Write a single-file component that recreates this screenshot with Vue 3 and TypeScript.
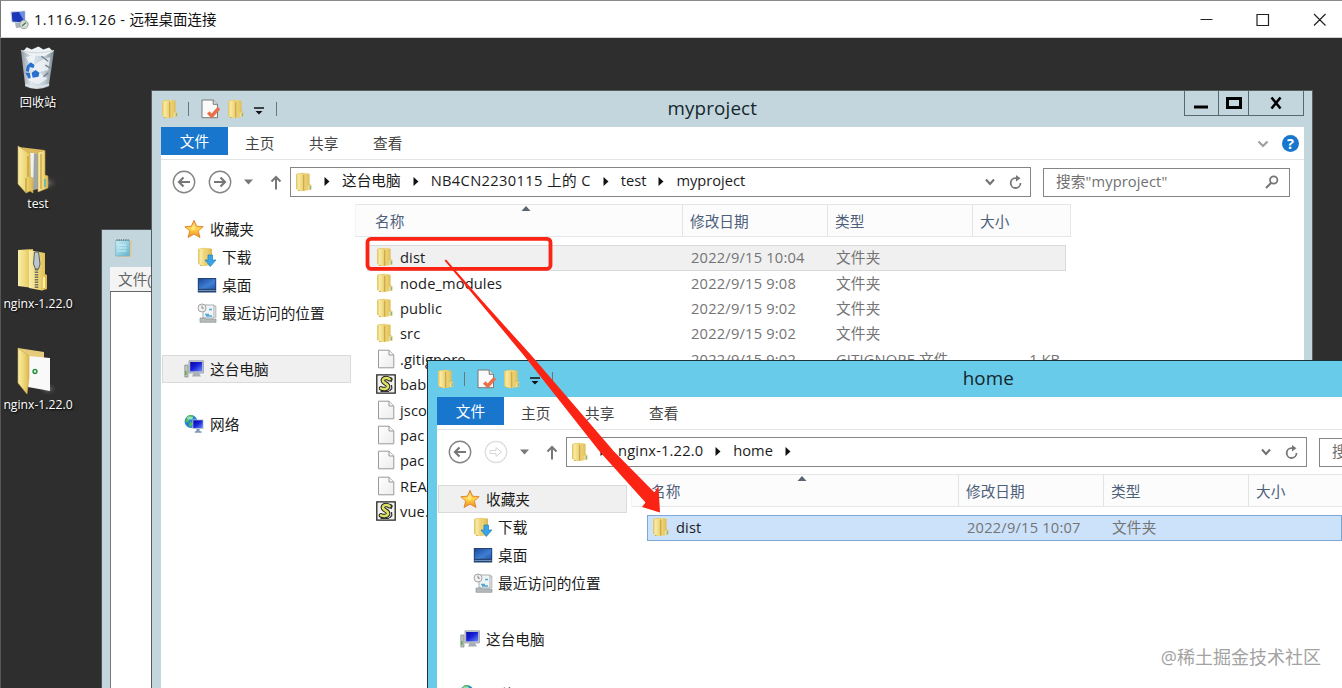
<script setup lang="ts">
interface FileRow {
  name: string
  icon: string
  date: string
  type: string
  size?: string
  state?: string
}
interface NavItem {
  label: string
  icon: string
  cls?: string
}
interface Crumb {
  label: string
  cls?: string
}
interface ExplorerWindow {
  id: string
  title: string
  path: Crumb[]
  search: string
  trailing: boolean
  selectedNav: string
  rows: FileRow[]
}

const desktopIcons = [
  { label: '回收站', icon: 'bin', cls: 'recycle' },
  { label: 'test', icon: 'folder-open', cls: 'test' },
  { label: 'nginx-1.22.0', icon: 'zip', cls: 'zipped' },
  { label: 'nginx-1.22.0', icon: 'folder-doc', cls: 'extracted' },
]

const nav: NavItem[] = [
  { label: '收藏夹', icon: 'star' },
  { label: '下载', icon: 'download', cls: 'child' },
  { label: '桌面', icon: 'desktop', cls: 'child' },
  { label: '最近访问的位置', icon: 'recent', cls: 'child' },
  { label: '这台电脑', icon: 'pc', cls: 'gap' },
  { label: '网络', icon: 'network', cls: 'gap' },
]

const tabs = ['主页', '共享', '查看']

const windows: ExplorerWindow[] = [
  {
    id: 'project',
    title: 'myproject',
    path: [
      { label: '这台电脑' },
      { label: 'NB4CN2230115 上的 C', cls: 'drive' },
      { label: 'test' },
      { label: 'myproject' },
    ],
    search: '搜索"myproject"',
    trailing: false,
    selectedNav: '这台电脑',
    rows: [
      { name: 'dist', icon: 'folder', date: '2022/9/15 10:04', type: '文件夹', state: 'hover' },
      { name: 'node_modules', icon: 'folder', date: '2022/9/15 9:08', type: '文件夹' },
      { name: 'public', icon: 'folder', date: '2022/9/15 9:02', type: '文件夹' },
      { name: 'src', icon: 'folder', date: '2022/9/15 9:02', type: '文件夹' },
      { name: '.gitignore', icon: 'file', date: '2022/9/15 9:02', type: 'GITIGNORE 文件', size: '1 KB' },
      { name: 'bab', icon: 'script', date: '', type: '' },
      { name: 'jsco', icon: 'file', date: '', type: '' },
      { name: 'pac', icon: 'file', date: '', type: '' },
      { name: 'pac', icon: 'file', date: '', type: '' },
      { name: 'REA', icon: 'file', date: '', type: '' },
      { name: 'vue.', icon: 'script', date: '', type: '' },
    ],
  },
  {
    id: 'home',
    title: 'home',
    path: [{ label: 'nginx-1.22.0', cls: 'version' }, { label: 'home' }],
    search: '搜索"home"',
    trailing: true,
    selectedNav: '收藏夹',
    rows: [{ name: 'dist', icon: 'folder', date: '2022/9/15 10:07', type: '文件夹', state: 'selected' }],
  },
]
</script>

<template>
  <div class="screen">
    <svg class="defs" aria-hidden="true">
      <defs>
        <linearGradient id="gFold" x1="0" x2="1"><stop offset="0" stop-color="#f8edaa" /><stop offset=".5" stop-color="#efd878" /><stop offset="1" stop-color="#dcb84c" /></linearGradient>
        <linearGradient id="gCover" x1="0" x2="1"><stop offset="0" stop-color="#dfc25a" /><stop offset=".35" stop-color="#f8eba6" /><stop offset="1" stop-color="#e9cd6c" /></linearGradient>
        <linearGradient id="gLeaf" x1="0" x2="1"><stop offset="0" stop-color="#c99f34" /><stop offset=".5" stop-color="#efd67a" /><stop offset="1" stop-color="#d9b54e" /></linearGradient>
        <linearGradient id="gStar" x1="0" y1="0" x2="0" y2="1"><stop offset="0" stop-color="#f0902c" /><stop offset=".5" stop-color="#ffd74a" /><stop offset="1" stop-color="#f08a20" /></linearGradient>
        <linearGradient id="gScreen" x1="0" y1="0" x2="1" y2="1"><stop offset="0" stop-color="#0808a0" /><stop offset=".45" stop-color="#1720d8" /><stop offset="1" stop-color="#6c8df0" /></linearGradient>
        <linearGradient id="gDesk" x1="0" y1="0" x2="1" y2="1"><stop offset="0" stop-color="#1b4a9c" /><stop offset=".6" stop-color="#3f7fd4" /><stop offset="1" stop-color="#2459b0" /></linearGradient>
        <linearGradient id="gPaper" x1="0" y1="0" x2="1" y2="1"><stop offset="0" stop-color="#fff" /><stop offset="1" stop-color="#ececec" /></linearGradient>
        <linearGradient id="gBin" x1="0" x2="1"><stop offset="0" stop-color="#8e979d" /><stop offset=".3" stop-color="#dfe8ee" /><stop offset=".7" stop-color="#c1ced8" /><stop offset="1" stop-color="#7d878e" /></linearGradient>
        <linearGradient id="gPad" x1="0" y1="0" x2="1" y2="1"><stop offset="0" stop-color="#c9eef6" /><stop offset="1" stop-color="#5fb4cd" /></linearGradient>
        <radialGradient id="gShade"><stop offset="0" stop-color="#8c8c8c" stop-opacity=".7" /><stop offset="1" stop-color="#2e2e2e" stop-opacity="0" /></radialGradient>

        <symbol id="folder" viewBox="0 0 18 20">
          <path d="M2.5 1.6 8 .8 14.6 1.8V12L16.4 13.2V17.6L9 19H3z" fill="url(#gLeaf)" />
          <path d="M1 2.6Q1 1.8 2 1.7L7.4 1.2Q8.6 1.4 8.6 2.6V18.4L6.8 19.2 1 17z" fill="url(#gCover)" />
          <path d="M8.8 3V18.6" stroke="#b98f2c" stroke-width=".8" fill="none" />
          <path d="M12.6 13.5 16.3 13.2V17.6L12.6 18.3z" fill="#f0dc90" />
          <path d="M15.3 14v3.2" stroke="#68b0a8" stroke-width="1.1" />
        </symbol>
        <symbol id="file" viewBox="0 0 18 20">
          <path d="M1.5 1.2H12L16.8 5.8V18.8H1.5z" fill="url(#gPaper)" stroke="#999" />
          <path d="M12 1.2V6H16.8" fill="#f7f7f7" stroke="#999" />
        </symbol>
        <symbol id="script" viewBox="0 0 20 20">
          <path d="M.8.8H19.2V19.2H.8z" fill="#f3f3ed" stroke="#222" stroke-width="1.3" />
          <path d="M13.6 5.2C9.5 2.6 5.5 4.8 7.4 7.8 8.8 9.8 12.8 10 12 13 11 15.6 7.5 15.4 5 14.4" fill="none" stroke="#222" stroke-width="4.6" stroke-linecap="round" />
          <path d="M13.6 5.2C9.5 2.6 5.5 4.8 7.4 7.8 8.8 9.8 12.8 10 12 13 11 15.6 7.5 15.4 5 14.4" fill="none" stroke="#dde264" stroke-width="2.6" stroke-linecap="round" />
          <path d="M14.5 3.5 16.2 5 15 8M15.5 11 15.8 14.5 13.5 17M4.5 17.3H13" fill="none" stroke="#333" stroke-width="1.2" />
        </symbol>
        <symbol id="check" viewBox="0 0 19 20">
          <path d="M1 1H12.2L16.5 5.3V18.7H1z" fill="#fafafa" stroke="#777" />
          <path d="M12.2 1V5.3H16.5" fill="#ddd" stroke="#777" />
          <path d="M7.2 13.5 10.8 17 18 9" fill="none" stroke="#e8704a" stroke-width="3.5" />
        </symbol>
        <symbol id="star" viewBox="0 0 20 19">
          <path d="M10 .8 12.6 6.7 19.2 7.2 14.3 11.5 16 18 10 14.6 4 18 5.8 11.5.8 7.2 7.4 6.7z" fill="url(#gStar)" stroke="#df812d" stroke-width=".9" />
          <path d="M10 3 11.7 7.7 10 11 7 9.5z" fill="#fff08a" opacity=".7" />
        </symbol>
        <symbol id="download" viewBox="0 0 20 20">
          <path d="M2.5 1.6 8 .8 15 1.8V18L9 19H3z" fill="url(#gLeaf)" />
          <path d="M1 2.6Q1 1.8 2 1.7L7.4 1.2Q8.6 1.4 8.6 2.6V18.4L6.8 19.2 1 17z" fill="url(#gCover)" />
          <path d="M11 8H15.5V13H19L13.3 19.5 8 13H11z" fill="#3aa2e6" stroke="#247fbf" stroke-width=".7" />
        </symbol>
        <symbol id="desktop" viewBox="0 0 20 20">
          <path d="M.8 3H19.2V17.5H.8z" fill="#25436f" />
          <path d="M1.8 4H18.2V13.8H1.8z" fill="url(#gDesk)" />
          <path d="M1.5 15.5H18.5" stroke="#7fa6cf" stroke-width=".8" />
        </symbol>
        <symbol id="recent" viewBox="0 0 20 20">
          <path d="M6 2H17V15H6z" fill="#eef3f5" stroke="#a6aeb2" />
          <path d="M12 6.5h3M8 11.5h4M9 13h6" stroke="#54a8d2" stroke-width="1.5" />
          <path d="M3 15H8L9 16H19V19.3H3z" fill="#b5babd" stroke="#8f9598" stroke-width=".7" />
          <path d="M17 3h1.8v12" fill="none" stroke="#a6aeb2" />
          <circle cx="5" cy="5" r="4" fill="#f1f1f1" stroke="#a4a4a4" />
          <path d="M5 2.5V5.2H7" stroke="#777" fill="none" stroke-width=".8" />
        </symbol>
        <symbol id="pc" viewBox="0 0 20 20">
          <path d="M.8 6H4V18H.8z" fill="#bfc6c0" stroke="#808883" stroke-width=".7" />
          <path d="M1.8 12v4" stroke="#57a94b" stroke-width="1.4" />
          <path d="M5 1.8H19.4V14H5z" fill="#c6ccd4" stroke="#888f98" stroke-width=".7" />
          <path d="M6.2 3H18.2V12.4H6.2z" fill="url(#gScreen)" />
          <path d="M9.5 14H15L17 17.5H8z" fill="#a7adb3" />
        </symbol>
        <symbol id="network" viewBox="0 0 20 20">
          <circle cx="7" cy="7.5" r="6.4" fill="#2585cf" />
          <path d="M3 3C6 0 8 1 9.5 2.5L7.5 5 5 5.5 4.5 8 1.2 8M6 8 9 9 7 13 5 12z" fill="#54bd54" />
          <ellipse cx="6" cy="4" rx="3" ry="1.6" fill="#bdf1e6" opacity=".7" />
          <path d="M8.5 5.5H19.5V15H8.5z" fill="#b7c4d6" />
          <path d="M9.3 6.3H18.7V14H9.3z" fill="url(#gScreen)" />
          <path d="M12.4 15h3.2v2.3h2v1.5H10.8v-1.5h1.6z" fill="#8096b5" />
        </symbol>
        <symbol id="bin" viewBox="0 0 38 46">
          <path d="M2 5 6.5 42Q18 47 30.5 42L36 5z" fill="url(#gBin)" />
          <path d="M4 6 8 1.8 13 4 20 .8 25 4 31 2 35 6 26 11 12 10z" fill="#eef2f4" />
          <path d="M7 12 17 9 15 20 25 14 32 12 30 25 21 27 29 34 20 40 9 35 16 27z" fill="#f3f7fa" opacity=".75" />
          <path d="M27 20 32 23 M23 11l7 5M25 32l5-4" stroke="#737f89" stroke-width="1.4" />
          <path d="M8 21 12 17 16 20 15 23 11 22 10 27 7 26zM6.5 28 11 28 12 33 10 34zM14 33 13 28 17 25 21 28 20 32z" fill="#286fce" />
          <path d="M2 5Q18 10 36 5" fill="none" stroke="#ccd4da" />
          <path d="M6.3 40Q18 45 31 40" fill="none" stroke="#e5e8e9" stroke-width="1.5" />
        </symbol>
        <symbol id="folder-open" viewBox="0 0 42 50">
          <ellipse cx="30" cy="38" rx="12" ry="8" fill="url(#gShade)" />
          <path d="M2 2 27 5V38L16 40z" fill="#dcb95a" />
          <path d="M13 8 18 8 21 44 14 45z" fill="#f2f2ea" />
          <path d="M17 8 22 10V44H16z" fill="#9fa6a8" />
          <path d="M21 7 28 5.5V30L31 31V43L21 47z" fill="url(#gFold)" stroke="#c2a04a" stroke-width=".6" />
          <path d="M1 1 13 9V32L16 33V48L13 46 9 48 1 39z" fill="url(#gFold)" stroke="#c9a850" stroke-width=".6" />
          <path d="M24 9V44M9 33V47M11 11V32" stroke="#b98f30" stroke-width="1" />
          <path d="M28 34v8" stroke="#73b9b1" stroke-width="2" />
        </symbol>
        <symbol id="zip" viewBox="0 0 42 50">
          <path d="M1 4 16 3V42L1 40z" fill="url(#gFold)" />
          <path d="M12 4 28 7V28L30 29V43L25 44.5 12 42z" fill="url(#gFold)" />
          <path d="M19.5 18V43" stroke="#76715f" stroke-width="3.5" stroke-dasharray="1.5 1" />
          <path d="M17.5 6h4l1.5 12-1.5 5h-3l-2-5z" fill="#bfc7cc" stroke="#566067" />
          <path d="M27 31v11" stroke="#fff0a6" stroke-width="2" />
        </symbol>
        <symbol id="folder-doc" viewBox="0 0 42 50">
          <ellipse cx="31" cy="42" rx="10" ry="7" fill="url(#gShade)" />
          <path d="M1 1 27 5V30H1z" fill="#e5cb7b" />
          <path d="M11 9 33 11V44L11 40z" fill="#f9f9f9" />
          <path d="M1 1 12 9V31L10 47 1 36z" fill="url(#gFold)" stroke="#c9a850" stroke-width=".6" />
          <circle cx="18" cy="24.5" r="1.9" fill="none" stroke="#269140" stroke-width="1.5" />
        </symbol>
        <symbol id="rdp" viewBox="0 0 20 20">
          <path d="M1 2 15 1V13L2 12z" fill="#1a38b8" stroke="#cad4e2" />
          <path d="M9 2H14.5V12z" fill="#8db2f5" opacity=".7" />
          <path d="M5 13H12L15 17 6 18z" fill="#a9b2b8" />
          <circle cx="14" cy="14.5" r="4.2" fill="#d6ddd9" stroke="#9ba39f" />
          <path d="M12 16 16 12.5" stroke="#4d7f4d" stroke-width="1.4" />
        </symbol>
      </defs>
    </svg>

    <header class="rdp-bar">
      <svg class="rdp-icon"><use href="#rdp" /></svg>
      <span class="rdp-title"><span class="host">1.116.9.126 - </span>远程桌面连接</span>
      <svg class="rdp-controls" viewBox="0 0 128 16">
        <path d="M.5 7.5H12.5M57 2.5H68.5V13.5H57zM114 2 125.5 13.5M125.5 2 114 13.5" fill="none" stroke="#222" stroke-width="1.2" />
      </svg>
    </header>

    <main class="desktop">
      <figure v-for="(d, i) in desktopIcons" :key="i" class="shortcut" :class="d.cls">
        <svg class="shortcut-icon"><use :href="'#' + d.icon" /></svg>
        <figcaption>{{ d.label }}</figcaption>
      </figure>
    </main>

    <section class="notepad">
      <div class="notepad-title">
        <svg viewBox="0 0 18 20">
          <path d="M2 2H17V19H3z" fill="#d9c79c" />
          <path d="M1 2.5H15V18H1z" fill="url(#gPad)" stroke="#79aebd" stroke-width=".6" />
          <path d="M2 2H15" stroke="#56777f" stroke-width="1.6" stroke-dasharray="1.2 1" />
          <path d="M3 7h9M3 10h9M3 13h9" stroke="#e0f8fc" stroke-width=".8" />
        </svg>
      </div>
      <div class="notepad-menu">文件(F)</div>
      <div class="notepad-body"></div>
    </section>

    <section v-for="w in windows" :key="w.id" class="window" :class="w.id">
      <div class="titlebar">
        <div class="quick">
          <svg class="q-folder"><use href="#folder" /></svg>
          <i class="sep"></i>
          <svg class="q-check"><use href="#check" /></svg>
          <svg class="q-folder"><use href="#folder" /></svg>
          <svg class="q-more" viewBox="0 0 10 8"><path d="M0 1H10" stroke="#111" stroke-width="1.5" /><path d="M1.5 4H8.5L5 7.5z" fill="#111" /></svg>
          <i class="sep"></i>
        </div>
        <h1>{{ w.title }}</h1>
        <div class="controls">
          <span class="c-min"><svg viewBox="0 0 16 14"><path d="M1 11H15" stroke="#000" stroke-width="3" /></svg></span>
          <span class="c-max"><svg viewBox="0 0 16 14"><path d="M1.5 2.5H14.5V11.5H1.5z" fill="none" stroke="#000" stroke-width="3" /></svg></span>
          <span class="c-close"><svg viewBox="0 0 16 14"><path d="M3.5 1.5 12.5 12.5M12.5 1.5 3.5 12.5" stroke="#000" stroke-width="2.6" /></svg></span>
        </div>
      </div>
      <div class="content">
        <div class="ribbon">
          <span class="tab-file">文件</span>
          <span v-for="t in tabs" :key="t" class="tab">{{ t }}</span>
          <svg class="collapse" viewBox="0 0 12 8"><path d="M1.5 1.5 6 6 10.5 1.5" fill="none" stroke="#a0a0a0" stroke-width="2.2" /></svg>
          <span class="help">?</span>
        </div>
        <div class="navbar">
          <svg class="circle" viewBox="0 0 24 24"><circle cx="12" cy="12" r="10.7" fill="none" stroke="#858585" stroke-width="1.4" /><path d="M18 12H7M11.5 7.5 7 12 11.5 16.5" fill="none" stroke="#777" stroke-width="2.2" /></svg>
          <svg v-if="!w.trailing" class="circle forward" viewBox="0 0 24 24"><circle cx="12" cy="12" r="10.7" fill="none" stroke="#858585" stroke-width="1.4" /><path d="M6 12H17M12.5 7.5 17 12 12.5 16.5" fill="none" stroke="#777" stroke-width="2.2" /></svg>
          <svg v-else class="circle forward" viewBox="0 0 24 24"><circle cx="12" cy="12" r="10.7" fill="none" stroke="#dedede" stroke-width="1.3" /><path d="M6 10.5H12V7.5L17.5 12 12 16.5V13.5H6z" fill="none" stroke="#d5d5d5" /></svg>
          <svg class="history" viewBox="0 0 9 6"><path d="M0 .5H9L4.5 5.5z" fill="#777" /></svg>
          <svg class="up" viewBox="0 0 12 15"><path d="M6 14.5V2M1.5 6.5 6 2 10.5 6.5" fill="none" stroke="#777" stroke-width="2" /></svg>
          <div class="address">
            <svg class="q-folder"><use href="#folder" /></svg>
            <template v-for="p in w.path" :key="p.label">
              <svg class="crumb-arrow" viewBox="0 0 6 9"><path d="M.5 0 5.5 4.5.5 9z" fill="#111" /></svg>
              <span class="crumb" :class="p.cls">{{ p.label }}</span>
            </template>
            <svg v-if="w.trailing" class="crumb-arrow" viewBox="0 0 6 9"><path d="M.5 0 5.5 4.5.5 9z" fill="#111" /></svg>
            <svg class="drop" viewBox="0 0 10 8"><path d="M1 1.5 5 6 9 1.5" fill="none" stroke="#707070" stroke-width="2" /></svg>
            <svg class="refresh" viewBox="0 0 14 15"><path d="M8 3.2H6.5A4.9 4.9 0 1 0 11.5 8" fill="none" stroke="#777" stroke-width="1.8" /><path d="M7 0 11.5 3.3 7 6.6z" fill="#777" /></svg>
          </div>
          <div class="search">
            <span>{{ w.search }}</span>
            <svg viewBox="0 0 14 14"><circle cx="8.7" cy="5" r="3.7" fill="none" stroke="#777" stroke-width="1.8" /><path d="M6 8 1 13" stroke="#777" stroke-width="2.2" /></svg>
          </div>
        </div>
        <div class="panes">
          <nav class="tree">
            <div v-for="n in nav" :key="n.label" class="node" :class="[n.cls, { active: n.label === w.selectedNav }]">
              <svg><use :href="'#' + n.icon" /></svg>
              <span>{{ n.label }}</span>
            </div>
          </nav>
          <div class="files">
            <div class="columns">
              <span class="col-name">名称<svg class="sort" viewBox="0 0 9 5"><path d="M0 5 4.5 0 9 5z" fill="#5b6472" /></svg></span>
              <span class="col">修改日期</span>
              <span class="col">类型</span>
              <span class="col col-size">大小</span>
            </div>
            <div class="rows">
              <div v-for="(r, i) in w.rows" :key="i" class="row" :class="r.state">
                <svg class="row-icon" :class="r.icon"><use :href="'#' + r.icon" /></svg>
                <span class="name">{{ r.name }}</span>
                <span class="meta">{{ r.date }}</span>
                <span class="meta">{{ r.type }}</span>
                <span class="size">{{ r.size }}</span>
              </div>
            </div>
          </div>
        </div>
      </div>
    </section>

    <svg class="annotation" viewBox="0 0 1342 688">
      <rect x="367.5" y="238.8" width="183" height="30" rx="3.5" fill="none" stroke="#fb2314" stroke-width="3.8" />
      <path d="M444.5 260.5 478.5 301 523.5 355 600 452 645.5 502.5 642 507 660 512.5 658.5 486 654.5 492.5 614 451.5 531 355 481.5 300 446 259.5z" fill="#fb2314" />
    </svg>
    <div class="watermark">@稀土掘金技术社区</div>
  </div>
</template>

<style scoped>
.screen {
  position: relative;
  width: 1342px;
  height: 688px;
  overflow: hidden;
  background: #2e2e2e;
  font-family: "Open Sans", "Noto Sans CJK SC", sans-serif;
  font-size: 14.67px;
  line-height: 20px;
  color: #1c1c1c;
  white-space: nowrap;
}
svg { display: block; flex: none; }
.defs { position: absolute; width: 0; height: 0; }

.rdp-bar {
  box-sizing: border-box;
  height: 38px;
  border-top: 1px solid #8a8a88;
  border-left: 1px solid #777;
  border-bottom: 1px solid #d0d0d0;
  background: #fff;
  display: flex;
  align-items: center;
  padding-left: 9px;
}
.rdp-icon { width: 20px; height: 20px; margin-top: 1px; }
.rdp-title { margin-left: 4px; margin-top: 2px; font-size: 14.5px; color: #111; }
.host { letter-spacing: 0.4px; }
.rdp-controls { width: 128px; height: 16px; margin-left: auto; margin-right: 14px; margin-top: 1px; }

.desktop {
  width: 75px;
  height: 650px;
  box-sizing: border-box;
  border-left: 1px solid #555;
  display: grid;
  grid-template-rows: 101px 101px 101px 101px;
  padding-top: 6px;
}
.shortcut {
  margin: 0;
  display: flex;
  flex-direction: column;
  align-items: center;
  color: #fff;
  font-size: 12.2px;
  text-shadow: 1px 1px 2px #000;
}
.shortcut-icon { width: 42px; height: 50px; margin-left: -1px; }
.recycle .shortcut-icon { width: 37px; height: 46px; margin-top: 1px; margin-bottom: 3px; }
.shortcut figcaption { line-height: 17px; }
.zipped figcaption, .extracted figcaption { line-height: 15px; }

.notepad {
  position: absolute;
  left: 101px;
  top: 229px;
  width: 300px;
  height: 470px;
  box-sizing: border-box;
  background: #c3d6dd;
  border: 1px solid #4e5558;
  padding: 0 8px;
}
.notepad-title { height: 37px; padding: 8px 4px; box-sizing: border-box; }
.notepad-title svg { width: 19px; height: 20px; }
.notepad-menu { height: 25px; box-sizing: border-box; padding: 2px 8px; background: #f4f4f4; border-bottom: 1px solid #666; color: #666; }
.notepad-body { height: 420px; background: #fff; border-left: 1px solid #777; }

.window {
  --frame: #c3d6de;
  position: absolute;
  box-sizing: border-box;
  width: 1162px;
  height: 780px;
  border: 1px solid #555d61;
  background: var(--frame);
  padding: 0 8px 0 9px;
}
.project { left: 151px; top: 90px; }
.home { --frame: #67cbe9; left: 427px; top: 360px; border-color: #17323c; }
.titlebar { height: 36px; display: flex; }
.quick { width: 118px; height: 36px; display: flex; align-items: center; }
.q-folder { width: 18px; height: 20px; }
.sep { width: 1px; height: 14px; background: #68777d; margin: 0 12px 0 9px; }
.q-check { width: 19px; height: 20px; margin-right: 7px; }
.q-more { width: 10px; height: 8px; margin-left: 9px; margin-top: 3px; }
.quick .sep:last-child { margin: 0 0 0 12px; flex: none; }
h1 {
  margin: 0;
  width: 870px;
  text-align: center;
  font-size: 18.8px;
  letter-spacing: 0.15px;
  font-weight: 400;
  line-height: 35px;
  color: #15262c;
}
.controls { display: flex; height: 25px; box-sizing: border-box; border: 1px solid #566870; border-top: 0; width: 120px; margin-left: 38px; }
.controls span { display: flex; align-items: center; justify-content: center; }
.controls svg { width: 16px; height: 14px; }
.c-min { width: 33px; }
.c-max { width: 30px; border-left: 1px solid #566870; }
.c-close { width: 54px; border-left: 1px solid #566870; }
.content { width: 1143px; height: 735px; background: #fff; }
.ribbon { height: 32px; border-bottom: 1px solid #e2e4e6; display: flex; align-items: flex-start; }
.tab-file { width: 67px; height: 28px; line-height: 28px; background: #1976cd; color: #fff; text-align: center; margin-right: 17px; }
.tab { width: 64px; line-height: 33px; color: #444; }
.collapse { width: 12px; height: 8px; margin: 13px 0 0 820px; }
.help { width: 17px; height: 17px; margin: 8px 0 0 13px; border-radius: 50%; background: #1976cd; color: #fff; text-align: center; font-weight: 700; line-height: 17px; }
.navbar { height: 44px; display: flex; align-items: center; padding-left: 11px; box-sizing: border-box; }
.circle { width: 24px; height: 24px; }
.forward { margin-left: 12px; }
.history { width: 9px; height: 6px; margin-left: 12px; }
.up { width: 12px; height: 15px; margin-left: 17px; }
.address { width: 741px; height: 30px; box-sizing: border-box; border: 1px solid #858585; margin-left: 8px; display: flex; align-items: center; padding-left: 4px; }
.address .q-folder { margin-right: 11px; }
.crumb-arrow { width: 6px; height: 9px; margin-right: 12px; margin-bottom: 1px; }
.crumb { margin-right: 12px; line-height: 24px; padding-bottom: 4px; }
.crumb.drive { letter-spacing: 0.36px; }
.crumb.version { letter-spacing: 0.17px; }
.drop { width: 10px; height: 8px; margin-left: auto; }
.refresh { width: 14px; height: 15px; margin: 0 7px 0 14px; }
.search { width: 247px; height: 29px; box-sizing: border-box; border: 1px solid #858585; margin-left: 12px; display: flex; align-items: center; justify-content: space-between; padding: 0 10px 0 12px; color: #707070; }
.search span { letter-spacing: 0.12px; padding-bottom: 2px; }
.search svg { width: 14px; height: 14px; }
.panes { display: flex; }
.tree { width: 194px; box-sizing: border-box; padding: 11px 4px 0 1px; }
.node { height: 28px; box-sizing: border-box; display: flex; align-items: center; border: 1px solid transparent; padding-left: 21px; }
.node svg { width: 20px; height: 20px; margin-right: 6px; }
.node.child { padding-left: 34px; }
.node.child svg { margin-right: 5px; }
.node.gap { margin-top: 27.5px; }
.node.active { background: #f0f0f0; border-color: #dadada; }
.columns { width: 716px; height: 33px; box-sizing: border-box; display: flex; border: 1px solid #e4e6e8; border-left-color: #f4f4f4; background: #fcfcfd; color: #4c607a; line-height: 32px; }
.col-name { width: 307px; padding-left: 19px; position: relative; }
.sort { position: absolute; left: 165px; top: 1px; width: 10px; height: 5px; }
.col { width: 137px; padding-left: 7px; border-left: 1px solid #e2e4e6; }
.col-size { width: 88px; }
.rows { padding: 8px 0 0 12px; }
.row { width: 699px; height: 25.4px; box-sizing: border-box; border: 1px solid transparent; display: flex; align-items: center; padding: 0 0 1px 8px; }
.row.hover { height: 26.4px; margin-bottom: -1px; padding-bottom: 2px; background: #f0f0f0; border-color: #dadada; }
.row.selected { width: 695px; height: 26.4px; margin-left: 4px; padding: 0 0 2px 4px; background: #cce2fb; border-color: #7da8d6; }
.row-icon { width: 18px; height: 20px; margin-right: 6px; }
.row-icon.file { margin: 0 5px 0 1px; }
.row-icon.script { width: 20px; margin: 0 4px 0 0; }
.name { width: 291px; letter-spacing: 0.12px; }
.meta { width: 145px; color: #747474; letter-spacing: 0.2px; }
.size { width: 79px; text-align: right; color: #747474; }

.annotation { position: absolute; left: 0; top: 0; width: 1342px; height: 688px; }
.watermark { position: absolute; right: 21px; top: 644px; font-size: 18px; line-height: 26px; color: #a2a2a2; }
</style>

<style>
body { margin: 0; }
</style>
